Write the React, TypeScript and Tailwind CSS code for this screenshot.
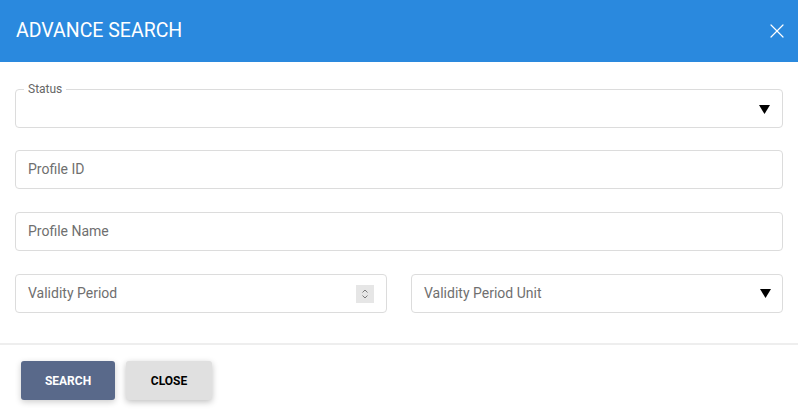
import React from 'react';
import { X } from 'lucide-react';

const Caret = () => (
  <svg width="11" height="9" viewBox="0 0 11 9" className="shrink-0">
    <path d="M0 0H11L5.5 9Z" fill="#000" />
  </svg>
);

const TextField: React.FC<{ placeholder: string; trailing?: React.ReactNode }> = ({ placeholder, trailing }) => (
  <div className="h-[39px] w-full border border-[#dcdcdc] rounded-[4px] flex items-center pl-[12px] pr-[11px] bg-white">
    <span className="flex-1 text-[14px] text-[#6f6f6f]">{placeholder}</span>
    {trailing}
  </div>
);

const Spinner = () => (
  <div className="w-[18px] h-[18px] bg-[#e6e6e6] flex items-center justify-center mr-[1px]">
    <svg width="8" height="12" viewBox="0 0 8 12">
      <path d="M1.5 4.5L4 2L6.5 4.5M1.5 7.5L4 10L6.5 7.5" stroke="#7a7a7a" strokeWidth="1" fill="none" />
    </svg>
  </div>
);

export default function App() {
  return (
    <div className="w-[798px] h-[415px] bg-white font-['Roboto','Liberation_Sans',sans-serif] overflow-hidden">
      <header className="h-[62px] bg-[#2a89de] flex items-center justify-between pl-[16px] pr-[9px]">
        <h1 className="text-[19.5px] text-white">ADVANCE SEARCH</h1>
        <X className="w-[24px] h-[24px] text-white" strokeWidth={1.2} />
      </header>

      <main className="px-[15px] pt-[20px] flex flex-col">
        <fieldset className="border border-[#dcdcdc] rounded-[4px] h-[46px] pr-[12px]">
          <legend className="ml-[8px] px-[4px] text-[12px] leading-[14px] text-[#666]">Status</legend>
          <div className="h-[26px] flex items-center justify-end">
            <Caret />
          </div>
        </fieldset>

        <div className="mt-[22px] flex flex-col gap-[23px]">
          <TextField placeholder="Profile ID" />
          <TextField placeholder="Profile Name" />
          <div className="grid grid-cols-2 gap-[24px]">
            <TextField placeholder="Validity Period" trailing={<Spinner />} />
            <TextField placeholder="Validity Period Unit" trailing={<Caret />} />
          </div>
        </div>
      </main>

      <div className="mt-[30px] border-t-2 border-[#eeeeee]" />

      <footer className="flex items-center gap-[11px] pl-[21px] pt-[16px]">
        <button className="w-[94px] h-[39px] rounded-[3px] bg-[#59698a] text-white text-[12px] font-bold shadow-[0_2px_6px_rgba(0,0,0,0.2)]">
          SEARCH
        </button>
        <button className="w-[86px] h-[39px] rounded-[3px] bg-[#e0e0e0] text-black text-[12px] font-bold shadow-[0_2px_6px_rgba(0,0,0,0.25)]">
          CLOSE
        </button>
      </footer>
    </div>
  );
}
